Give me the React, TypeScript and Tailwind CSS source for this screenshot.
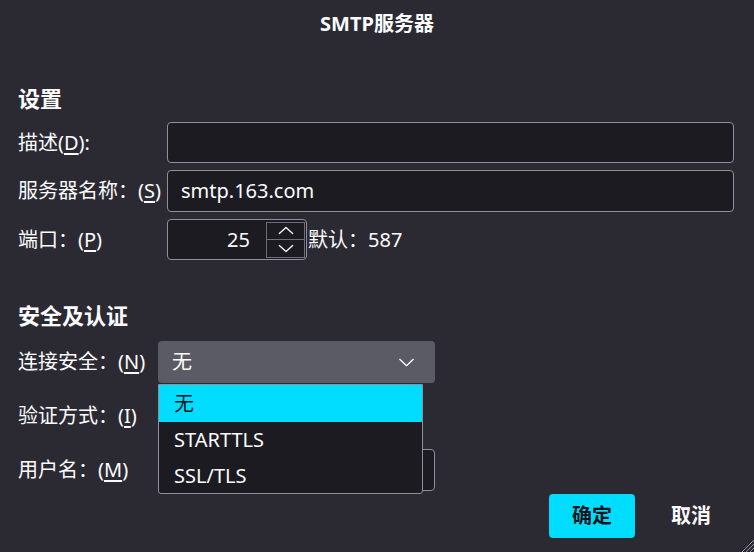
const font = {
  fontFamily: '"Noto Sans", "Noto Sans CJK SC", sans-serif',
};

function Label({ text, k, tail = '' }: { text: string; k: string; tail?: string }) {
  return (
    <span className="text-[20px] leading-[28px] whitespace-nowrap">
      {text}(<span className="underline underline-offset-[3px]">{k}</span>){tail}
    </span>
  );
}

function Chevron({ up = false, w = 18, h = 10 }: { up?: boolean; w?: number; h?: number }) {
  return (
    <svg width={w} height={h} viewBox="0 0 18 10" fill="none">
      <path
        d={up ? 'M1.5 8.5 L9 1.5 L16.5 8.5' : 'M1.5 1.5 L9 8.5 L16.5 1.5'}
        stroke="#fbfbfe"
        strokeWidth="1.5"
        strokeLinecap="round"
        strokeLinejoin="round"
      />
    </svg>
  );
}

export default function App() {
  return (
    <div
      style={font}
      className="relative w-[754px] h-[552px] overflow-hidden bg-[#2b2a33] text-[#fbfbfe] flex flex-col"
    >
      <h1 className="pt-[10px] text-center text-[20px] font-bold leading-[28px]">SMTP服务器</h1>

      <div className="pl-[18px]">
        <h2 className="mt-[46px] text-[22px] font-bold leading-[28px]">设置</h2>

        <div className="mt-[10px] grid grid-cols-[149px_567px] gap-y-[7px] items-center">
          <Label text="描述" k="D" tail=":" />
          <div className="h-[41px] rounded-[4px] border border-[#8f8f9d] bg-[#1c1b22]" />

          <Label text="服务器名称：" k="S" />
          <div className="h-[42px] rounded-[4px] border border-[#8f8f9d] bg-[#1c1b22] flex items-center pl-[13px] text-[20px]">
            smtp.163.com
          </div>

          <Label text="端口：" k="P" />
          <div className="flex items-center">
            <div className="w-[140px] h-[41px] rounded-[4px] border border-[#8f8f9d] bg-[#1c1b22] flex items-center">
              <span className="flex-1 text-right pr-[16px] text-[20px]">25</span>
              <div className="w-[39px] h-[36px] mr-[1px] border border-[#6e6d78] flex flex-col">
                <div className="flex-1 flex items-center justify-center border-b border-[#6e6d78]">
                  <Chevron up w={16} h={9} />
                </div>
                <div className="flex-1 flex items-center justify-center">
                  <Chevron w={16} h={9} />
                </div>
              </div>
            </div>
            <span className="ml-px text-[20px] leading-[28px]">默认：587</span>
          </div>
        </div>

        <h2 className="mt-[41px] text-[22px] font-bold leading-[28px]">安全及认证</h2>

        <div className="mt-[12px] grid grid-cols-[140px_277px] gap-y-[12px] items-center">
          <Label text="连接安全：" k="N" />
          <div className="h-[42px] rounded-[4px] bg-[#5b5b66] flex items-center justify-between pl-[14px] pr-[20px] text-[20px]">
            <span>无</span>
            <Chevron w={17} h={9} />
          </div>

          <Label text="验证方式：" k="I" />
          <div className="h-[42px]" />

          <Label text="用户名：" k="M" />
          <div className="h-[42px] rounded-[4px] border border-[#8f8f9d] bg-[#1c1b22]" />
        </div>
      </div>

      <div className="mt-[3px] flex justify-end gap-[13px] pr-[20px]">
        <button className="w-[86px] h-[44px] rounded-[4px] bg-[#00ddff] text-[#15141a] text-[20px] font-bold">
          确定
        </button>
        <button className="w-[86px] h-[44px] rounded-[4px] text-[20px] font-bold">取消</button>
      </div>

      <div className="absolute left-[158px] top-[384px] w-[265px] border border-[#8f8f9d] rounded-b-[3px] bg-[#1c1b22] text-[20px] flex flex-col">
        <div className="h-[37px] bg-[#00ddff] text-[#15141a] flex items-center pl-[15px]">无</div>
        <div className="h-[36px] flex items-center pl-[15px]">STARTTLS</div>
        <div className="h-[35px] flex items-center pl-[15px]">SSL/TLS</div>
      </div>

      <svg className="absolute right-0 bottom-0" width="14" height="14" viewBox="0 0 14 14">
        <path d="M14 2 L2 14 M14 6 L6 14 M14 10 L10 14" stroke="#8f8f9d" strokeWidth="1" />
      </svg>
    </div>
  );
}
